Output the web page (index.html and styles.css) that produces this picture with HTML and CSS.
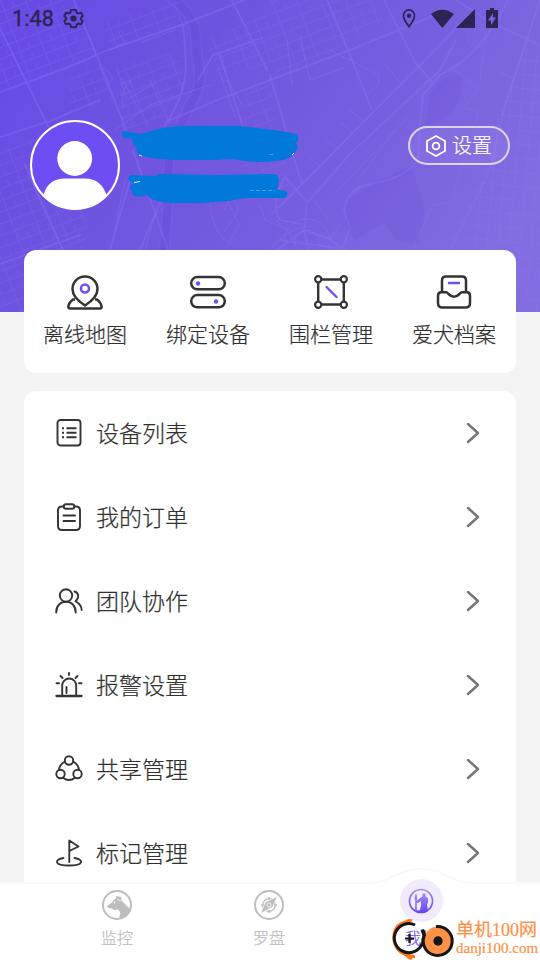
FILE: index.html
```html
<!DOCTYPE html>
<html lang="zh-CN">
<head>
<meta charset="utf-8">
<title>我的</title>
<link rel="stylesheet" href="styles.css">
</head>
<body>
<div class="screen">
  <svg class="map" viewBox="0 0 540 312" fill="none" stroke="#8f76f5" stroke-linecap="round" stroke-linejoin="round">
    <defs>
      <linearGradient id="sky" x1="0" y1="0.2" x2="1" y2="0.6"><stop stop-color="#694be4"/><stop offset=".5" stop-color="#7359de"/><stop offset="1" stop-color="#846ce1"/></linearGradient>
      <pattern id="blocks" width="23" height="11" patternUnits="userSpaceOnUse" patternTransform="rotate(-21)"><path d="M0 .5H23M.5 0V11M11 6V11" stroke-width="1"/></pattern>
      <pattern id="grid" width="11" height="14" patternUnits="userSpaceOnUse" patternTransform="rotate(5)"><path d="M0 .5H11M.5 0V14" stroke-width="1"/></pattern>
    </defs>
    <path d="M0 0H540V312H0Z" fill="url(#sky)" stroke="none"/>
    <g fill="#684cd7" stroke="none" opacity=".17"><path d="M430 95Q448 68 461 78Q465 100 444 120L426 125ZM350 200Q375 180 412 166L425 210L418 245L395 240L385 222L355 240Q338 219 350 200Z"/></g>
    <path d="M170-3C191 10 196 26 196 44C196 65 207 80 190 105Q177 132 169 160Q168 210 164 255" stroke="#8064eb" stroke-width="12" opacity=".25"/>
    <path d="M170-3C191 10 196 26 196 44C196 65 207 80 190 105Q177 132 169 160Q168 210 164 255" stroke="#664ad7" stroke-width="8" opacity=".5"/>
    <g fill="url(#blocks)" stroke="none" opacity=".22"><path d="M0 0H73L97 55L0 91ZM103 20L183 0V25L108 50ZM70 78L98 61L114 99L70 110ZM118 66L180 50L187 87L155 125L123 130ZM270 0H372L385 23L276 80ZM207 40L266 15L278 60L218 80ZM0 150L70 120L100 312H0ZM245 90L270 85L290 190L240 190Z"/></g>
    <g fill="url(#grid)" stroke="none" opacity=".3"><path d="M525 48L540 55V312H450L493 130Z"/></g>
    <g stroke-width="2" opacity=".34">
      <path d="M0 92Q75 66 105 51L184 24L257-5M0 137L50 121L100 100M0 28L49 128L70 170M72-4L96 53L127 132M130 180L100 285M133 150L168 250M172 175L140 250M230-4L267 70M207 65L213 55L262 38M220 55L247 140M170 120L220 99L270 80L355 48L435 15M0 264L80 235M25 165L65 255M270 75L302 185M325-5L352 60L371 108M382-4L415 62L432 82M183 25Q187 65 185 78Q181 101 165 126M207 65L198 80"/>
      <path d="M461 22L440 45L300 186L272 214M456 40L440 70L350 154L308 202M508 0Q480 57 440 75L423 95M540 45L490 22L450-4M423 95L420 124L418 160Q402 180 370 184Q347 189 344 210L350 228L342 250M285 177L307 202L304 230L330 239L358 260M285 177Q270 205 280 220L302 224M304 230L270 255M304 230L315 275M280 240L350 250M540 0L505 105L490 170L450 250"/>
    </g>
    <g stroke-width="1" opacity=".38">
      <path d="M110 50L125 43L118 31M117 68L127 100L155 83M122 78L140 112M131 80Q120 91 123 108M150 80L170 124M105 68L113 78L107 86M115 130L150 105L210 85M142 42L175 30M215 60L236 118M224 82L228 80L242 105M287 40L292 85M300 35L310 80L343 68M330 50L379 75L378 85L366 95M343 57L352 60M386 65L406 90M395 130L358 180M408 118L338 190M454 70L474 85L478 90L463 108Q480 110 477 120L470 128M484 50L480 80M500 72L515 80M465 20Q470 15 481 25M210 180Q230 200 239 225L225 250M125 180L115 230M178 195L155 215L145 250M275 220Q290 230 295 245M330 240L340 224M314 200L328 220M412 250L433 205L452 202L463 160M350 110L362 120M340 122L352 132M325 140L340 150M310 158L322 168"/>
      <path d="M225 210C225 196 238 199 238 208S227 225 224 232M210 205Q215 240 233 244M260 205L265 220L290 230M268 255Q280 230 308 226"/>
      <circle cx="477" cy="38" r="9"/><circle cx="307" cy="242" r="23"/><circle cx="307" cy="242" r="12"/>
    </g>
  </svg>

  <div class="content">
    <header class="status">
      <span class="time">1:48</span>
      <svg class="gear" viewBox="0 0 22 22" fill="none" stroke="#302354" stroke-width="2"><path stroke-linejoin="round" d="M8.400 2h5.200l.700 2.800 1.800 1 2.800-.800 1.800 3.400-2 2v1.300l2 2-1.800 3.400-2.800-.800-1.800 1-.700 2.800H8.400l-.700-2.800-1.800-1-2.800.800-1.800-3.400 2-2v-1.300l-2-2L3.100 5l2.800.800 1.800-1z"/><circle cx="11" cy="11" r="3.200" fill="#302354" stroke="none"/></svg>
      <svg class="signals" viewBox="0 0 100 24" fill="#302354"><path d="M9 6A5.500 5.500 0 0 1 14.500 11.500C14.500 15 11.500 18.500 9 21.500C6.500 18.500 3.500 15 3.500 11.500A5.500 5.500 0 0 1 9 6" transform="translate(0 -2.600) scale(1 1.080)" fill="none" stroke="#302354" stroke-width="1.700"/><circle cx="9" cy="9.700" r="2.200"/><path d="M31 8Q42-.5 54 8L42.400 22ZM56 22L75 3V22Z"/><path fill-rule="evenodd" d="M86 4H90V2H94V4H98V22H86ZM93 7L88 14.500H91V19L96 11.500H93Z"/></svg>
    </header>

    <section class="profile">
      <svg class="avatar" viewBox="0 0 90 90"><defs><clipPath id="face"><circle cx="45" cy="45" r="44.500"/></clipPath></defs><circle cx="45" cy="45" r="44" fill="#6e4df3" stroke="#fff" stroke-width="2"/><g fill="#fff" clip-path="url(#face)"><circle cx="44.700" cy="38.500" r="17.400"/><path d="M13 77Q17 58.500 35 58.500H55Q72 58.500 77 77L70 90H20Z"/></g></svg>
      <svg class="scribble" viewBox="0 0 180 90" fill="#0079db"><path d="M4 11Q1 11 2 15Q3 19 8 18L13 19Q11 24 17 28Q15 34 22 36Q36 40 63 40H99Q109 38 118 40Q142 44 163 40Q171 38 175 32Q180 27 176 23Q181 18 176 14Q152 9 118 6H57Q38 8 21 14ZM11 55Q7 57 9 61L14 63Q8 66 11 69L13 75Q17 78 27 75Q33 83 58 83H81L110 81Q123 78 129 78H163Q169 77 167 72Q166 70 158 70L157 68Q160 65 158 56Q157 54 152 54L101 55L40 54L35 56Z"/><path d="M19 35L22 36M14 62.500L20 61.500M172 35L174 33" stroke="#dceef7"/><path d="M130 70.500H155M149 34.500H153" stroke="#4a9fe2" stroke-dasharray="4 2"/></svg>
      <div class="settings"><svg viewBox="0 0 24 24" fill="none" stroke="#fff" stroke-width="1.800" stroke-linejoin="round"><path d="M12 2L21 7V17L12 22L3 17V7Z"/><circle cx="12" cy="12" r="3.400"/></svg><span>设置</span></div>
    </section>

    <section class="quick">
      <div class="tile"><svg viewBox="0 0 40 40" fill="none" stroke="#343434" stroke-width="2.500" stroke-linejoin="round"><path d="M20 33.500C13 29 7.500 23 7.500 17A12.500 12.500 0 0 1 32.500 17C32.500 23 27 29 20 33.500Z"/><path d="M10 27.500H8Q3.500 31 3.300 35Q3.500 36.500 5 36.500H35Q36.500 36.500 36.700 35Q36 30.500 32 27.500H30"/><circle cx="20" cy="16.500" r="4" stroke="#7050f5"/></svg><span>离线地图</span></div>
      <div class="tile"><svg viewBox="0 0 40 40" fill="none" stroke="#343434" stroke-width="2.500"><rect x="3.200" y="5" width="33.600" height="12.300" rx="6.100"/><rect x="3.200" y="23" width="33.600" height="12.300" rx="6.100"/><g fill="#7050f5" stroke="none"><circle cx="10" cy="11.500" r="2.200"/><circle cx="28" cy="29.500" r="2.200"/></g></svg><span>绑定设备</span></div>
      <div class="tile"><svg viewBox="0 0 40 40" fill="none" stroke="#343434" stroke-width="2.400"><path d="M10 7.500H30M10 32.500H30M7.200 10V30M32.800 10V30"/><g stroke-width="2.200"><circle cx="7.200" cy="7.300" r="3.100"/><circle cx="32.800" cy="7.300" r="3.100"/><circle cx="7.200" cy="32.700" r="3.100"/><circle cx="32.800" cy="32.700" r="3.100"/></g><path stroke="#7050f5" stroke-linecap="round" d="M15.500 15L25.500 25"/></svg><span>围栏管理</span></div>
      <div class="tile"><svg viewBox="0 0 40 40" fill="none" stroke="#343434" stroke-width="2.500" stroke-linejoin="round"><path d="M8 19V8.500Q8 4.500 12 4.500H28Q32 4.500 32 8.500V19M7 20.200H12Q13 20.200 14.500 22Q20 27.500 25.500 22Q27 20.200 28 20.200H33Q36 20.200 36 24V31Q36 35.500 31.500 35.500H8.500Q4 35.500 4 31V24Q4 20.200 7 20.200Z"/><path stroke="#7050f5" stroke-linecap="round" d="M15 11H25"/></svg><span>爱犬档案</span></div>
    </section>

    <section class="list">
      <div class="row"><svg class="icon" viewBox="0 0 30 30"><rect x="3.500" y="2" width="23" height="25.500" rx="3"/><path stroke-linecap="butt" d="M8 10.200H10M8 14.700H10M8 19.200H10M12.500 10.200H22.500M12.500 14.700H22.500M12.500 19.200H22.500"/></svg><span>设备列表</span><svg class="chevron" viewBox="0 0 16 24"><path d="M3 3L13 12L3 21"/></svg></div>
      <div class="row"><svg class="icon" viewBox="0 0 30 30"><path d="M10 4.500H8Q4 4.500 4 8.500V24Q4 28 8 28H22Q26 28 26 24V8.500Q26 4.500 22 4.500H20M9.500 13.500H21M9.500 19H21"/><rect x="9.800" y="2.300" width="10.400" height="4.400" rx="2"/></svg><span>我的订单</span><svg class="chevron" viewBox="0 0 16 24"><path d="M3 3L13 12L3 21"/></svg></div>
      <div class="row"><svg class="icon" viewBox="0 0 30 30"><circle cx="12" cy="9.500" r="6.200"/><path d="M2.200 26.500C2.200 19.500 6.500 15.700 12 15.700S21.700 19.500 21.700 26.500M20.500 5.500C25.500 7 25 12.500 21.500 15.200C25.500 17.500 27.700 19.500 27.700 24"/></svg><span>团队协作</span><svg class="chevron" viewBox="0 0 16 24"><path d="M3 3L13 12L3 21"/></svg></div>
      <div class="row"><svg class="icon" viewBox="0 0 30 30"><path stroke-width="2.300" d="M2.500 26H27.500"/><path d="M8.200 26V15.500A7 7 0 0 1 22.200 15.500V26M12.500 17V23M2.500 13.300H5M25 13.300H27.500M6.500 6L8.500 8M23.500 6L21.500 8M15 3V5"/></svg><span>报警设置</span><svg class="chevron" viewBox="0 0 16 24"><path d="M3 3L13 12L3 21"/></svg></div>
      <div class="row"><svg class="icon" viewBox="0 0 30 30"><circle cx="15" cy="6.500" r="4.200"/><circle cx="6.500" cy="20" r="4.200"/><circle cx="23.500" cy="20" r="4.200"/><path d="M11 7.500Q5.500 10.500 5 16M19 7.500Q24.500 10.500 25 16M9 23.700Q15 28.500 21 23.700"/></svg><span>共享管理</span><svg class="chevron" viewBox="0 0 16 24"><path d="M3 3L13 12L3 21"/></svg></div>
      <div class="row"><svg class="icon" viewBox="0 0 30 30"><path d="M15.300 24V2.500L24.500 8.500L15.300 13M9.500 20C0 21.500 0 27.500 15 27.500S30 21.500 20.500 20"/></svg><span>标记管理</span><svg class="chevron" viewBox="0 0 16 24"><path d="M3 3L13 12L3 21"/></svg></div>
    </section>
  </div>

  <nav class="tabs">
    <svg class="bump" viewBox="0 0 540 94"><path d="M-3 17H368C394 17 395 3 421 3S448 17 474 17H543V97H-3Z" fill="#fff" stroke="#f9f9f9" stroke-width="2"/></svg>
    <div class="tab"><svg viewBox="0 0 32 32"><circle cx="16" cy="16" r="14" fill="none" stroke="#bdbdbd" stroke-width="2"/><path fill="#bdbdbd" d="M6 17L11 13.500L12.500 11L15 9.500V7L20 8L21 12L25 16L29 20Q27 27 20 29L18 28Q21 24 17 20.500L13 21L11 19.500L7 19Z"/><circle cx="13.500" cy="13.500" r=".9" fill="#fff"/><path d="M16 10L19 12L21 11" fill="none" stroke="#fff" stroke-width=".7"/></svg><span>监控</span></div>
    <div class="tab"><svg viewBox="0 0 32 32" fill="none" stroke="#bdbdbd" stroke-width="2"><circle cx="16" cy="16" r="14"/><circle cx="16" cy="16" r="6.300" stroke-width="1.300"/><path stroke-width="1.500" d="M16 8V11M16 21V24M8 16H11M21 16H24"/><path fill="#bdbdbd" stroke="#fff" stroke-width=".6" d="M24.500 7.500L19.500 18L7.500 24.500L12.500 13Z"/><circle cx="16" cy="16" r="2" fill="#bdbdbd" stroke="#fff" stroke-width=".8"/></svg><span>罗盘</span></div>
    <div class="tab active"><div class="halo"><svg viewBox="0 0 26 26"><defs><linearGradient id="violet" x2="0" y2="1"><stop stop-color="#a28ff2"/><stop offset="1" stop-color="#6544ef"/></linearGradient></defs><circle cx="13" cy="13" r="11.500" fill="none" stroke="url(#violet)" stroke-width="1.700"/><path fill="url(#violet)" d="M14.500 5.500H17.500V8.500L20 10V15L19 16L20 23Q14 27 7 22.500H10L12 22L13 17V13L10 15L8.700 14.500V22.500H7.300V12L6.500 11L7 8L8 5L9 8V11L8.500 13L12 10L14.500 8.500Z"/></svg></div><span>我的</span></div>
    <div class="brand">
      <svg viewBox="0 0 62 44" fill="none"><path d="M18 4Q3 6 2.500 20Q3 38 24 40" stroke="#ff7417" stroke-width="2.500"/><path d="M10 7L17 2L22 2.500L19 6ZM12 36L24 38L20 43Q16 42 12 36" fill="#ff7417"/><path d="M24 8A14.500 14.500 0 1 0 30 29Q33 25 32 21" stroke="#171617" stroke-width="3"/><path d="M14 21.500H23M18.500 17V26" stroke="#171617" stroke-width="2.200"/><path d="M29.500 13L33 12L36 19L33 23Z" fill="#171617"/><circle cx="47" cy="24" r="14.500" fill="#ff9146"/><path d="M45 9.600A14.500 14.500 0 1 1 34 17" stroke="#171617" stroke-width="3"/><circle cx="47" cy="24" r="4.700" fill="#171617"/></svg>
      <div class="brand-text"><span class="site">单机100网</span><span class="domain">danji100.com</span></div>
    </div>
  </nav>
</div>
</body>
</html>
```
FILE: styles.css
```css
* { box-sizing: border-box; }
body { margin: 0; font-family: "Noto Sans CJK SC", sans-serif; color: #303030; font-weight: 300; -webkit-text-stroke: .22px currentColor; }
svg { display: block; flex: none; overflow: visible; }
.screen { position: relative; width: 540px; height: 960px; overflow: hidden; background: #f4f4f4; }
.map { position: absolute; inset: 0; width: 540px; height: 312px; overflow: hidden; }
.content { position: relative; }
.status { display: flex; height: 38px; padding: 0 40px 0 12px; align-items: center; color: #302354; }
.time { width: 51px; font: 400 21.5px/36px Roboto, sans-serif; letter-spacing: .1px; -webkit-text-stroke: .4px currentColor; }
.gear { width: 21px; height: 21px; margin-top: -1px; }
.signals { width: 100px; height: 24px; margin-left: auto; margin-top: -3px; }
.profile { display: flex; height: 212px; padding: 82px 30px 0; }
.avatar { width: 90px; height: 90px; }
.scribble { width: 180px; height: 90px; }
.settings { display: flex; width: 102px; height: 39px; margin: 6px 0 0 auto; padding-left: 14px; align-items: center; gap: 4px; border: 2px solid #d9d5e4; border-radius: 20px; background: rgba(255,255,255,.06); color: #fff; font-size: 20px; line-height: 35px; }
.settings svg { width: 24px; height: 24px; }
.settings span { margin-top: -2px; }
.quick { display: grid; grid-template-columns: repeat(4, 123px); height: 123px; margin: 0 24px 18px; background: #fff; border-radius: 12px; }
.tile { display: flex; flex-direction: column; align-items: center; padding: 22px 1px 0 0; font-size: 21px; line-height: 30px; }
.tile svg { width: 40px; height: 40px; margin: 0 1px 6px 0; }
.list { margin: 0 24px; border-radius: 12px; background: #fff; }
.row { display: flex; height: 84px; padding: 0 35px 0 30px; align-items: center; font-size: 23px; line-height: 34px; }
.row span { margin-top: -2px; }
.icon { width: 30px; height: 30px; margin-right: 12px; fill: none; stroke: #343434; stroke-width: 1.9; stroke-linejoin: round; stroke-linecap: round; }
.chevron { width: 16px; height: 24px; margin-left: auto; fill: none; stroke: #777; stroke-width: 2.5; stroke-linecap: round; stroke-linejoin: round; margin-top: -1px; }
.tabs { position: absolute; left: 0; bottom: 0; width: 540px; height: 94px; display: flex; padding: 23px 43px 0 41px; }
.bump { position: absolute; inset: 0; width: 540px; height: 94px; overflow: hidden; }
.tab { position: relative; display: flex; width: 152px; flex-direction: column; align-items: center; font-size: 16px; line-height: 24px; color: #bdbdbd; }
.tab > svg { width: 32px; height: 32px; margin-bottom: 4px; }
.halo { display: grid; width: 43px; height: 43px; margin: -10px 0 3px; place-items: center; background: #f0ecfd; border-radius: 50%; }
.halo svg { width: 26px; height: 26px; }
.active { color: #7050f5; }
.brand { position: absolute; left: 391px; bottom: 0; display: flex; width: 149px; height: 43px; gap: 3px; }
.brand > svg { width: 62px; height: 44px; }
.brand-text { display: flex; flex-direction: column; padding-top: 4px; color: #ff9146; white-space: nowrap; }
.site { font: 400 18px/19px "Liberation Serif", "Noto Sans CJK SC", serif; }
.domain { font: 400 15px/17px "Liberation Serif", serif; }
```
